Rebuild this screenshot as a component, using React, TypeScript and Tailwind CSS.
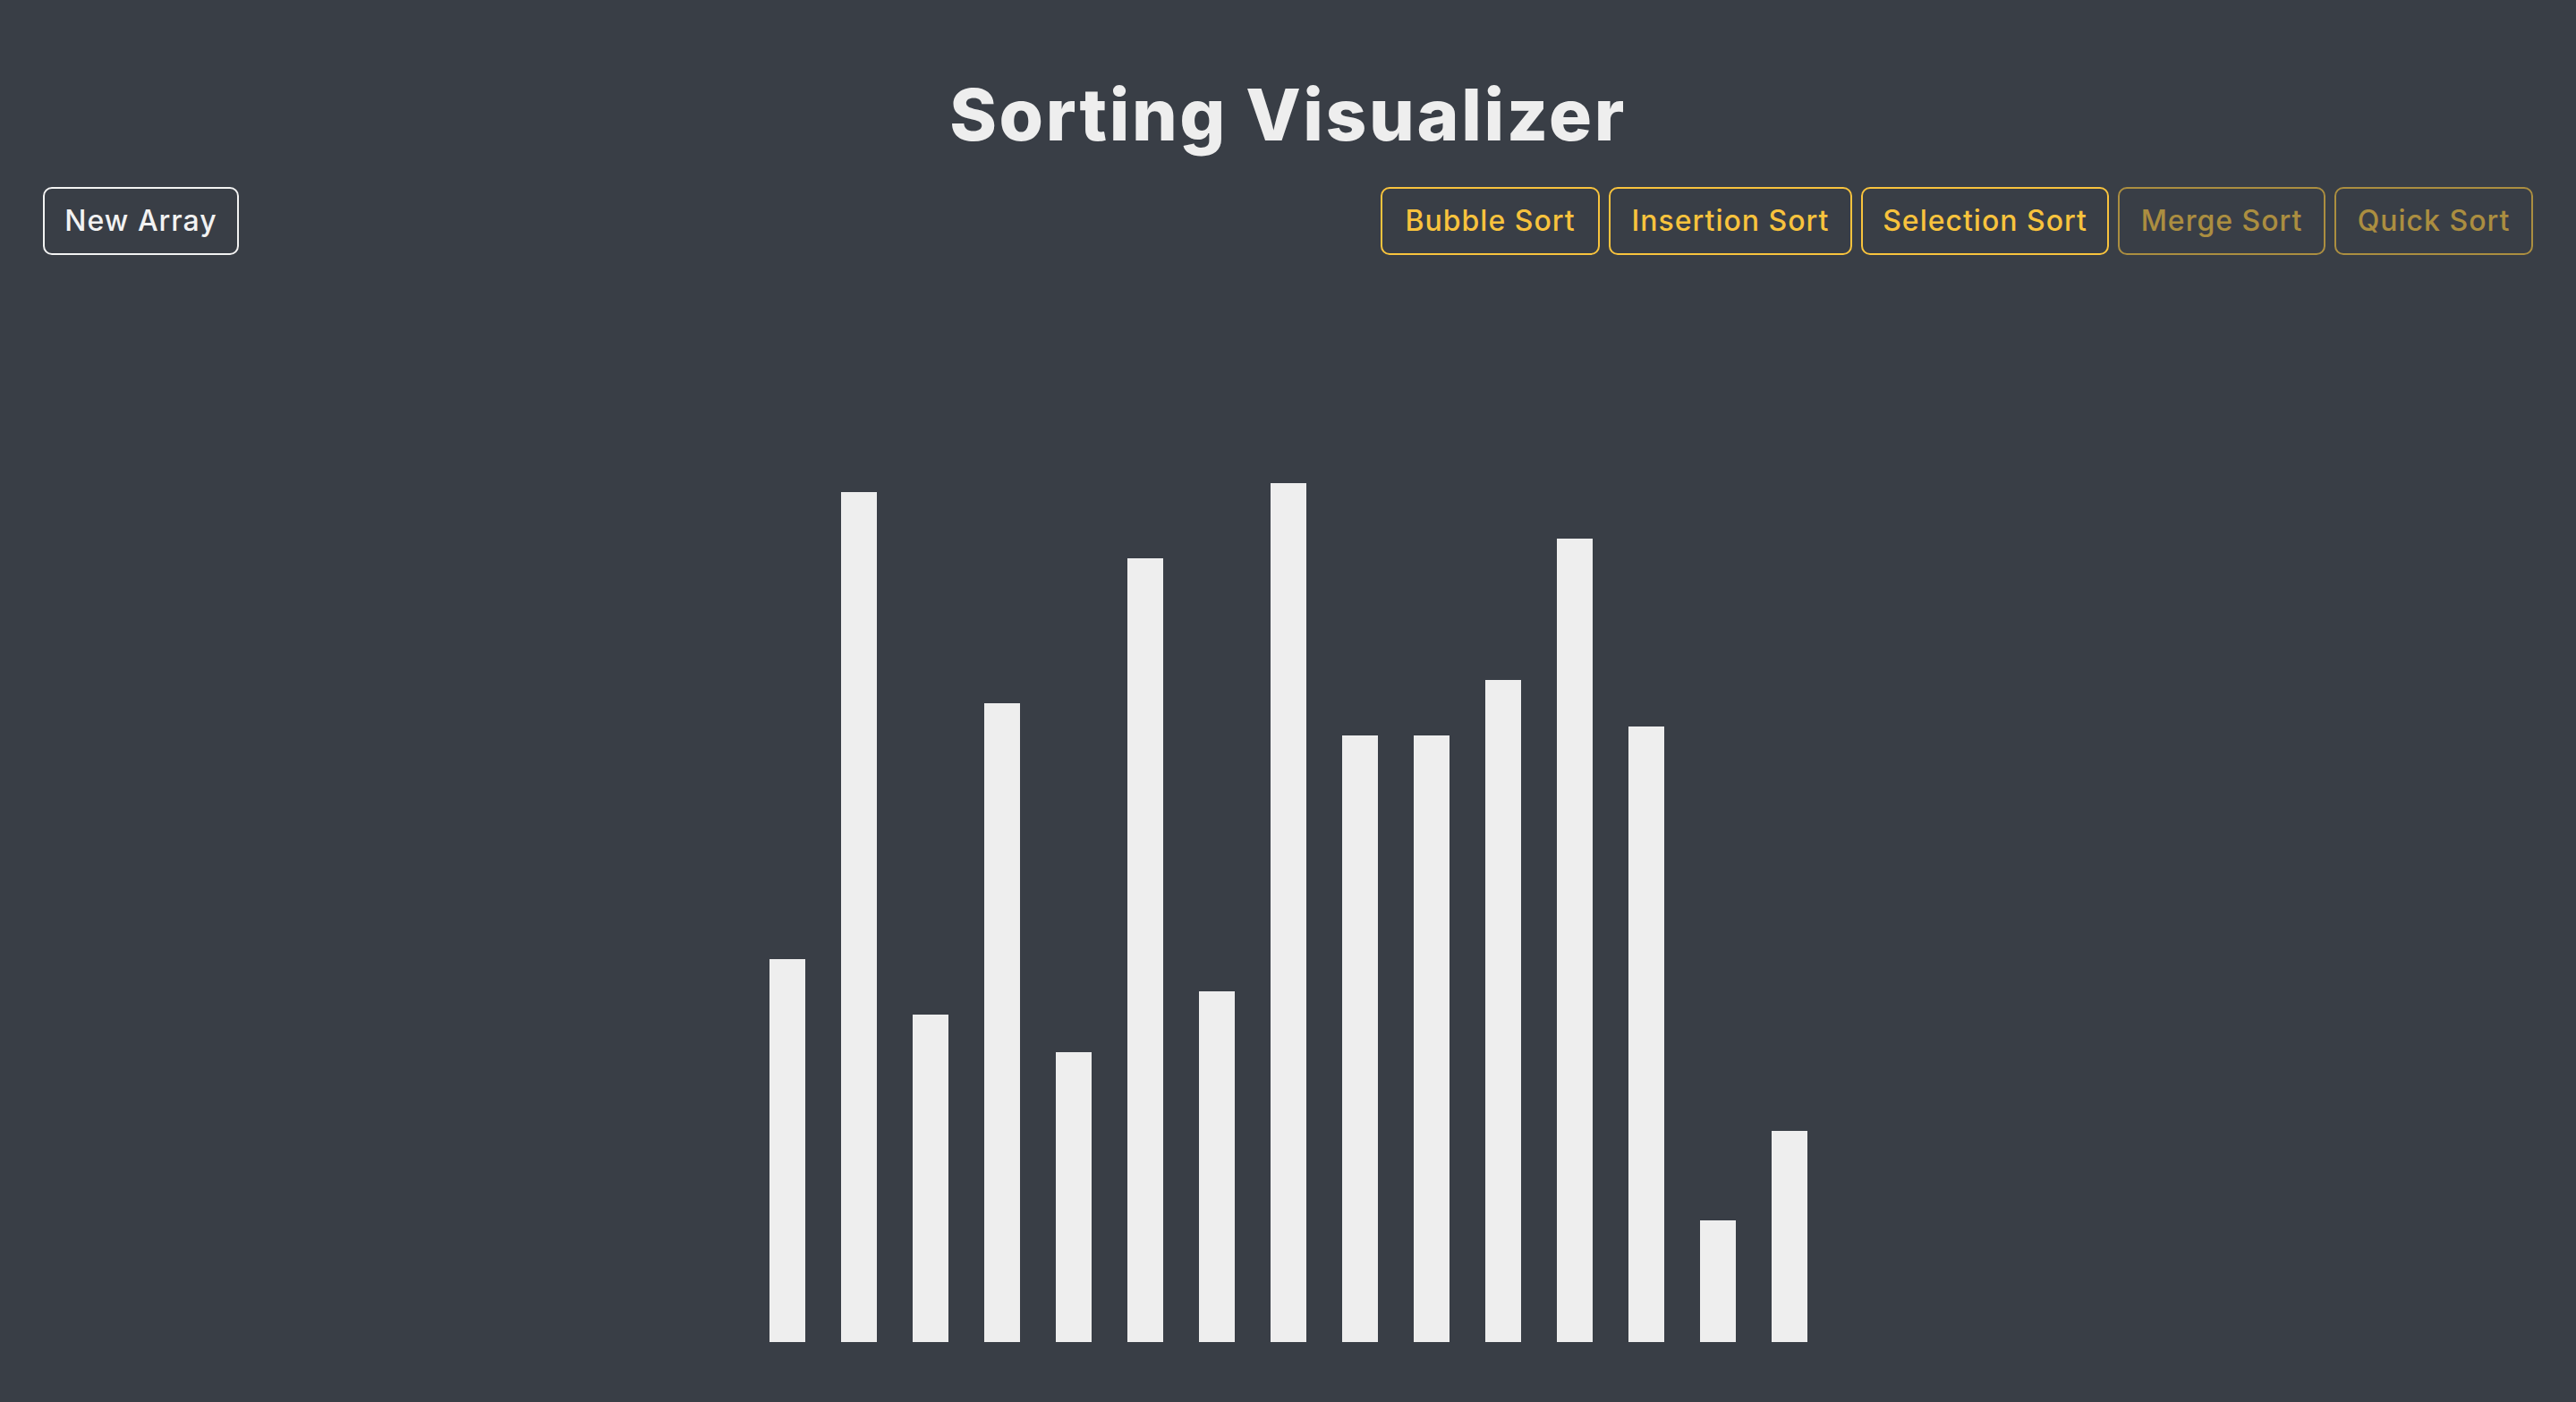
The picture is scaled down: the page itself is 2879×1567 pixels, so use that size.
import React from "react";

const heights = [428, 950, 366, 714, 324, 876, 392, 960, 678, 678, 740, 898, 688, 136, 236];

const sorts = [
  { label: "Bubble Sort", w: "w-[245px]", dim: false },
  { label: "Insertion Sort", w: "w-[272px]", dim: false },
  { label: "Selection Sort", w: "w-[277px]", dim: false },
  { label: "Merge Sort", w: "w-[232px]", dim: true },
  { label: "Quick Sort", w: "w-[222px]", dim: true },
];

export default function App() {
  return (
    <div
      className="min-h-screen bg-[#393e46] flex flex-col"
      style={{ fontFamily: "Inter, 'Noto Sans', sans-serif" }}
    >
      <h1 className="pt-[88px] text-center text-[80px] leading-none font-extrabold text-[#eeeeee] tracking-[2.6px]">
        Sorting Visualizer
      </h1>
      <div className="mt-[41px] flex items-center justify-between px-[48px]">
        <button className="w-[219px] h-[76px] rounded-[10px] border-2 border-[#f2f2f2] text-[#f2f2f2] text-[32px] font-medium flex items-center justify-center tracking-[1px]">
          New Array
        </button>
        <div className="flex items-center gap-[10px]">
          {sorts.map((s) => (
            <button
              key={s.label}
              className={
                s.w +
                " h-[76px] rounded-[10px] border-2 border-[#f8c33d] text-[#f8c33d] text-[32px] font-medium flex items-center justify-center tracking-[1px] " +
                (s.dim ? "opacity-60" : "")
              }
            >
              {s.label}
            </button>
          ))}
        </div>
      </div>
      <div className="flex-1 flex items-end justify-center gap-[40px] pb-[67px]">
        {heights.map((h, i) => (
          <div key={i} className="w-[40px] bg-[#eeeeee]" style={{ height: h }} />
        ))}
      </div>
    </div>
  );
}
